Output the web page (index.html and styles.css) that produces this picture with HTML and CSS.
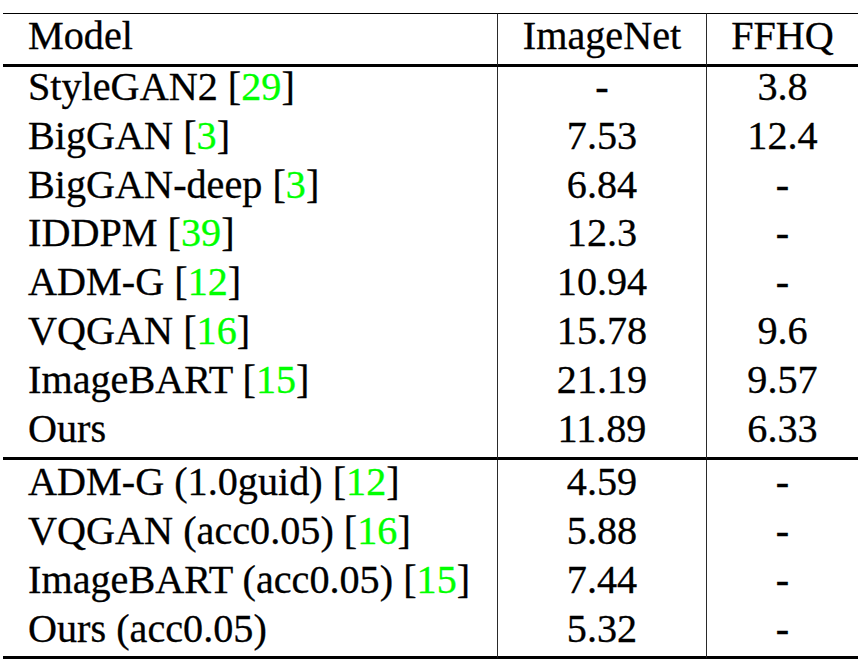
FILE: index.html
```html
<!DOCTYPE html>
<html>
<head>
<meta charset="utf-8">
<link rel="stylesheet" href="styles.css">
</head>
<body>
<table class="results">
  <colgroup>
    <col class="c-model">
    <col class="c-in">
    <col class="c-ff">
  </colgroup>
  <thead>
    <tr><th class="model">Model</th><th class="num">ImageNet</th><th class="num">FFHQ</th></tr>
  </thead>
  <tbody class="g1">
    <tr><td class="model">StyleGAN2 [<span class="cite">29</span>]</td><td class="num">-</td><td class="num">3.8</td></tr>
    <tr><td class="model">BigGAN [<span class="cite">3</span>]</td><td class="num">7.53</td><td class="num">12.4</td></tr>
    <tr><td class="model">BigGAN-deep [<span class="cite">3</span>]</td><td class="num">6.84</td><td class="num">-</td></tr>
    <tr><td class="model">IDDPM [<span class="cite">39</span>]</td><td class="num">12.3</td><td class="num">-</td></tr>
    <tr><td class="model">ADM-G [<span class="cite">12</span>]</td><td class="num">10.94</td><td class="num">-</td></tr>
    <tr><td class="model">VQGAN [<span class="cite">16</span>]</td><td class="num">15.78</td><td class="num">9.6</td></tr>
    <tr><td class="model">ImageBART [<span class="cite">15</span>]</td><td class="num">21.19</td><td class="num">9.57</td></tr>
    <tr class="last"><td class="model">Ours</td><td class="num">11.89</td><td class="num">6.33</td></tr>
  </tbody>
  <tbody class="g2">
    <tr class="first"><td class="model">ADM-G (1.0guid) [<span class="cite">12</span>]</td><td class="num">4.59</td><td class="num">-</td></tr>
    <tr><td class="model">VQGAN (acc0.05) [<span class="cite">16</span>]</td><td class="num">5.88</td><td class="num">-</td></tr>
    <tr><td class="model">ImageBART (acc0.05) [<span class="cite">15</span>]</td><td class="num">7.44</td><td class="num">-</td></tr>
    <tr class="last"><td class="model">Ours (acc0.05)</td><td class="num">5.32</td><td class="num">-</td></tr>
  </tbody>
</table>
</body>
</html>
```
FILE: styles.css
```css
html, body {
  margin: 0;
  padding: 0;
  background: #fff;
}
body {
  font-family: "Liberation Serif", "Times New Roman", serif;
  font-size: 40.2px;
  color: #000;
  -webkit-text-stroke: 0.3px currentColor;
}
.results {
  margin: 13px 0 0 3px;
  width: 855px;
  table-layout: fixed;
  border-collapse: separate;
  border-spacing: 0;
}
.c-model { width: 494px; }
.c-in { width: 209px; }
.c-ff { width: 152px; }

.results th,
.results td {
  font-weight: normal;
  line-height: 40px;
  padding: 0 0 8.8px 0;
  white-space: nowrap;
}
.results th {
  padding-top: 1.5px;
  padding-bottom: 8.5px;
  border-top: 1px solid #000;
  border-bottom: 3px solid #000;
}
.results .model {
  text-align: left;
  padding-left: 25px;
}
.results .num {
  text-align: center;
  border-left: 1px solid #2a2a2a;
}
.results tr.last td {
  border-bottom: 3px solid #000;
}
.g2 tr.first td {
  padding-top: 2px;
}
.g2 tr.last td {
  padding-bottom: 7px;
}
.cite {
  color: #00ff00;
}
```
